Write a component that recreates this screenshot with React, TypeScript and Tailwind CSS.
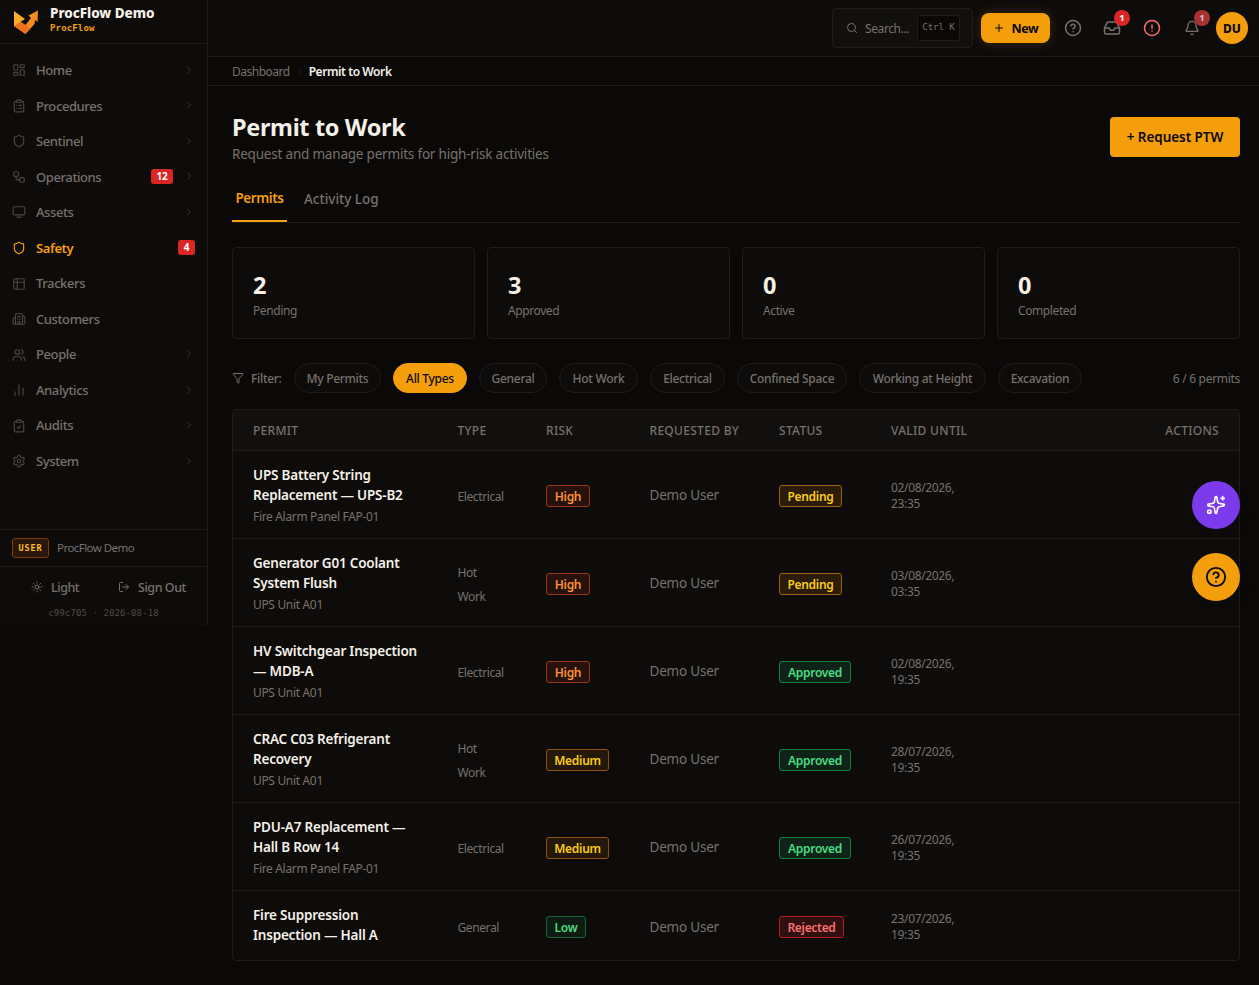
import React from 'react';
import {
  LayoutDashboard, ClipboardList, Shield, Workflow, Monitor, Table2, Building2, Users, ChartNoAxesColumn,
  ClipboardCheck, Settings, ChevronRight, Sun, LogOut, Search, Plus, CircleHelp, Inbox, CircleAlert, Bell,
  Filter, Sparkles, type LucideIcon,
} from 'lucide-react';

interface NavItem {
  label: string;
  icon: LucideIcon;
  badge?: string;
  active?: boolean;
  chevron?: boolean;
}

interface Permit {
  title: string;
  asset?: string;
  type: string;
  risk: 'High' | 'Medium' | 'Low';
  status: 'Pending' | 'Approved' | 'Rejected';
  date: string;
  time: string;
}

const navItems: NavItem[] = [
  { label: 'Home', icon: LayoutDashboard, chevron: true },
  { label: 'Procedures', icon: ClipboardList, chevron: true },
  { label: 'Sentinel', icon: Shield, chevron: true },
  { label: 'Operations', icon: Workflow, badge: '12', chevron: true },
  { label: 'Assets', icon: Monitor, chevron: true },
  { label: 'Safety', icon: Shield, badge: '4', active: true },
  { label: 'Trackers', icon: Table2 },
  { label: 'Customers', icon: Building2 },
  { label: 'People', icon: Users, chevron: true },
  { label: 'Analytics', icon: ChartNoAxesColumn, chevron: true },
  { label: 'Audits', icon: ClipboardCheck, chevron: true },
  { label: 'System', icon: Settings, chevron: true },
];

const stats = [
  { value: 2, label: 'Pending' },
  { value: 3, label: 'Approved' },
  { value: 0, label: 'Active' },
  { value: 0, label: 'Completed' },
];

const filters = [
  { label: 'My Permits', width: 'w-[87px]' },
  { label: 'All Types', width: 'w-[74px]', active: true },
  { label: 'General', width: 'w-[68px]' },
  { label: 'Hot Work', width: 'w-[79px]' },
  { label: 'Electrical', width: 'w-[75px]' },
  { label: 'Confined Space', width: 'w-[110px]' },
  { label: 'Working at Height', width: 'w-[127px]' },
  { label: 'Excavation', width: 'w-[84px]' },
];

const permits: Permit[] = [
  { title: 'UPS Battery String\nReplacement — UPS-B2', asset: 'Fire Alarm Panel FAP-01', type: 'Electrical', risk: 'High', status: 'Pending', date: '02/08/2026,', time: '23:35' },
  { title: 'Generator G01 Coolant\nSystem Flush', asset: 'UPS Unit A01', type: 'Hot\nWork', risk: 'High', status: 'Pending', date: '03/08/2026,', time: '03:35' },
  { title: 'HV Switchgear Inspection\n— MDB-A', asset: 'UPS Unit A01', type: 'Electrical', risk: 'High', status: 'Approved', date: '02/08/2026,', time: '19:35' },
  { title: 'CRAC C03 Refrigerant\nRecovery', asset: 'UPS Unit A01', type: 'Hot\nWork', risk: 'Medium', status: 'Approved', date: '28/07/2026,', time: '19:35' },
  { title: 'PDU-A7 Replacement —\nHall B Row 14', asset: 'Fire Alarm Panel FAP-01', type: 'Electrical', risk: 'Medium', status: 'Approved', date: '26/07/2026,', time: '19:35' },
  { title: 'Fire Suppression\nInspection — Hall A', type: 'General', risk: 'Low', status: 'Rejected', date: '23/07/2026,', time: '19:35' },
];

const riskStyles = {
  High: 'w-11 bg-[#26120b] border-[#9a3412] text-[#fb923c]',
  Medium: 'w-[63px] bg-[#23180a] border-[#92500e] text-[#facc15]',
  Low: 'w-10 bg-[#0e1c13] border-[#166534] text-[#4ade80]',
};

const statusStyles = {
  Pending: 'w-[63px] bg-[#2b1c0c] border-[#a16207] text-[#facc15]',
  Approved: 'w-[72px] bg-[#0f2318] border-[#15803d] text-[#4ade80]',
  Rejected: 'w-[65px] bg-[#2e1010] border-[#b91c1c] text-[#f87171]',
};

const Tag: React.FC<{ label: string; className: string }> = ({ label, className }) => (
  <span className={`mt-[3px] flex h-[22px] items-center justify-center rounded-[3px] border pt-0.5 text-xs font-semibold tracking-[-0.3px] ${className}`}>
    {label}
  </span>
);

const Logo: React.FC = () => (
  <svg viewBox="0 0 24 24" className="h-6 w-6">
    <path d="M0 16 L6 11.5 L11.5 15 L17 8 L14.5 5.5 L24 0.5 L23.5 12 L21 10 L20.5 14 L11.5 24 Z" fill="#f68b1f" />
    <path d="M0 16 L6 12 L11.5 15 L16 18.8 L11.5 24 Z" fill="#f0701f" />
    <path d="M0 1 L11 9 L0 16 Z" fill="#fbab2c" />
  </svg>
);

const Sidebar: React.FC = () => (
  <aside className="flex h-[625px] w-52 shrink-0 flex-col border-r border-[#1f1d1b] bg-[#0d0c0a]">
    <div className="flex h-11 items-center gap-3 border-b border-[#1f1d1b] pl-3.5">
      <Logo />
      <div className="pb-0.5">
        <div className="text-[13.5px] leading-[15px] font-extrabold tracking-[-0.05px] text-[#f5f0e8]">ProcFlow Demo</div>
        <div className="mt-px font-['DejaVu_Sans_Mono'] text-[9px] leading-[13px] font-semibold tracking-[0.15px] text-[#f59e0b]">ProcFlow</div>
      </div>
    </div>

    <nav className="flex-1 pt-[9px]">
      {navItems.map(({ label, icon: Icon, badge, active, chevron }) => (
        <div key={label} className={`flex h-[35.55px] items-center px-3 ${active ? 'text-[#f59e0b]' : 'text-[#78716c]'}`}>
          <Icon className={`mb-px h-3.5 w-3.5 ${active ? '' : 'text-[#4a4540]'}`} />
          <span className={`ml-2.5 flex-1 text-[13px] tracking-[-0.4px] ${active ? 'font-semibold' : 'font-medium'}`}>{label}</span>
          {badge && (
            <span className={`mb-0.5 flex h-[15px] items-center justify-center rounded-[3px] bg-[#dc2626] text-[10px] font-bold tracking-[-0.2px] text-white ${active ? 'w-[17px]' : 'mr-2.5 w-[22px]'}`}>
              {badge}
            </span>
          )}
          {chevron && <ChevronRight className="mb-0.5 h-3 w-3 text-[#3b3734]" />}
        </div>
      ))}
    </nav>

    <div className="flex h-[37px] items-center border-t border-[#1f1d1b] pl-3">
      <span className="flex h-5 w-[37px] items-center justify-center rounded-[3px] border border-[#7c3a0c] bg-[#2a170a] font-['DejaVu_Sans_Mono'] text-[8.5px] font-bold tracking-[0.9px] text-[#fbbf24]">
        USER
      </span>
      <span className="ml-2 text-[11.5px] tracking-[-0.55px] text-[#78716c]">ProcFlow Demo</span>
    </div>

    <div className="h-[59px] border-t border-[#1f1d1b] pt-[9px] text-[#78716c]">
      <div className="flex h-6 items-center text-[12.5px] font-medium tracking-[-0.45px]">
        <Sun className="mb-0.5 ml-[31px] h-3 w-3" />
        <span className="ml-2 w-[28px]">Light</span>
        <LogOut className="mb-0.5 ml-[39px] h-3 w-3" />
        <span className="ml-2">Sign Out</span>
      </div>
      <div className="mt-[5px] text-center font-['DejaVu_Sans_Mono'] text-[9px] leading-4 tracking-[0.1px] text-[#4f4a45]">c99c705 · 2026-08-18</div>
    </div>
  </aside>
);

const TopBar: React.FC = () => (
  <header className="flex h-[57px] items-center justify-end border-b border-[#1f1d1b] bg-[#0d0c0a] pr-[11px] text-[#78716c]">
    <div className="flex h-10 w-[141px] items-center rounded border border-[#1f1d1b] bg-[#11100e] pl-[13px]">
      <Search className="h-3 w-3" />
      <span className="mt-px ml-[7px] w-11 text-xs tracking-[-0.4px]">Search...</span>
      <kbd className="ml-2 flex h-[26px] w-[43px] items-center justify-center rounded-[3px] border border-[#1f1d1b] bg-[#0a0908] font-['DejaVu_Sans_Mono'] text-[9px]">
        Ctrl K
      </kbd>
    </div>
    <button className="ml-2 flex h-[30px] w-[69px] items-center justify-center gap-[7px] rounded-lg bg-[#f59e0b] text-[12.5px] font-bold tracking-[-0.4px] text-[#0a0908] shadow-[0_0_12px_rgba(245,158,11,0.2)]">
      <Plus className="h-3 w-3" />
      <span className="mt-0.5">New</span>
    </button>
    <CircleHelp className="ml-3.5 h-[18px] w-[18px]" />
    <div className="relative ml-[21px]">
      <Inbox className="h-[18px] w-[18px]" />
      <span className="absolute -top-[9px] left-[11px] flex h-4 w-4 items-center justify-center rounded-full bg-[#dc2626] text-[9.5px] font-bold text-white">1</span>
    </div>
    <CircleAlert className="ml-[22px] h-[18px] w-[18px] text-[#f87171]" />
    <div className="relative ml-[23px]">
      <Bell className="h-4 w-4" />
      <span className="absolute -top-[10px] left-[10px] flex h-4 w-4 items-center justify-center rounded-full bg-[#a83232] text-[9.5px] font-bold text-[#c9c4c0]">1</span>
    </div>
    <div className="ml-4 flex h-8 w-8 items-center justify-center rounded-full bg-[#f59e0b] pt-0.5 text-xs font-extrabold text-[#0a0908]">DU</div>
  </header>
);

const PermitTable: React.FC = () => (
  <div className="mt-4 overflow-hidden rounded border border-[#1f1d1b] bg-[#0d0c0a]">
    <table className="w-full table-fixed border-collapse text-left text-[#78716c]">
      <colgroup>
        <col className="w-[204.5px]" />
        <col className="w-[88.5px]" />
        <col className="w-[103.5px]" />
        <col className="w-[129.5px]" />
        <col className="w-28" />
        <col className="w-[146px]" />
        <col />
      </colgroup>
      <thead>
        <tr className="h-10 border-b border-[#1f1d1b] bg-[#11100e] text-xs tracking-[0.3px] whitespace-nowrap uppercase">
          {['Permit', 'Type', 'Risk', 'Requested by', 'Status', 'Valid until'].map((head) => (
            <th key={head} className="pt-0.5 pl-5 font-medium">{head}</th>
          ))}
          <th className="pt-0.5 pr-5 text-right font-medium">Actions</th>
        </tr>
      </thead>
      <tbody>
        {permits.map((permit) => (
          <tr key={permit.title} className={`border-b border-[#1f1d1b] last:border-b-0 ${permit.asset ? 'h-[88px]' : 'h-[70px]'}`}>
            <td className={`pl-5 whitespace-pre ${permit.asset ? 'pt-[3px]' : ''}`}>
              <div className="text-[13.5px] leading-5 font-semibold tracking-[-0.2px] text-[#f5f0e8]">{permit.title}</div>
              {permit.asset && <div className="mt-0.5 text-xs leading-5 tracking-[-0.33px]">{permit.asset}</div>}
            </td>
            <td className="pt-[5px] pl-5 text-xs leading-6 tracking-[-0.4px] whitespace-pre">{permit.type}</td>
            <td className="pt-px pl-5"><Tag label={permit.risk} className={riskStyles[permit.risk]} /></td>
            <td className="pt-[3px] pl-5 text-[13.5px] tracking-[-0.2px]">Demo User</td>
            <td className="pt-px pl-5"><Tag label={permit.status} className={statusStyles[permit.status]} /></td>
            <td className="pt-[3px] pl-5 text-xs leading-4 tracking-[-0.35px]">{permit.date}<br />{permit.time}</td>
            <td />
          </tr>
        ))}
      </tbody>
    </table>
  </div>
);

export default function App() {
  return (
    <div className="relative flex h-[985px] w-full items-start overflow-hidden bg-[#0a0908] font-['Noto_Sans',sans-serif]">
      <Sidebar />

      <div className="min-w-0 flex-1">
        <TopBar />

        <div className="flex h-[29px] items-center border-b border-[#1f1d1b] pt-0.5 pl-6 text-xs text-[#78716c]">
          <span className="tracking-[-0.5px]">Dashboard</span>
          <ChevronRight className="mx-1 h-[11px] w-[11px] text-[#292524]" />
          <span className="font-semibold tracking-[-0.42px] text-[#f5f0e8]">Permit to Work</span>
        </div>

        <main className="pt-[27px] pr-[19px] pl-6">
          <div className="flex items-start justify-between">
            <div>
              <h1 className="text-[23.5px] leading-7 font-bold tracking-[-0.35px] text-[#f5f0e8]">Permit to Work</h1>
              <p className="mt-[3px] text-[13.5px] leading-5 tracking-[-0.2px] text-[#78716c]">Request and manage permits for high-risk activities</p>
            </div>
            <button className="mt-1 h-10 w-[130px] rounded bg-[#f59e0b] pt-px text-[13.5px] font-semibold tracking-[-0.05px] text-[#0a0908]">+ Request PTW</button>
          </div>

          {/* Tabs */}
          <div className="mt-[11px] flex h-12 border-b border-[#1f1d1b] text-[13.5px]">
            <div className="flex h-[47px] w-[55px] items-center justify-center border-b-2 border-[#f59e0b] pt-0.5 font-semibold tracking-[-0.4px] text-[#f59e0b]">Permits</div>
            <div className="ml-[17px] flex items-center pt-0.5 font-medium text-[#78716c]">Activity Log</div>
          </div>

          {/* Stats */}
          <div className="mt-6 grid grid-cols-4 gap-3">
            {stats.map((stat) => (
              <div key={stat.label} className="h-[92px] rounded border border-[#1f1d1b] bg-[#0d0c0a] px-5 pt-[21px]">
                <div className="text-[23.5px] leading-8 font-bold text-[#f5f0e8]">{stat.value}</div>
                <div className="text-xs leading-5 tracking-[-0.4px] text-[#78716c]">{stat.label}</div>
              </div>
            ))}
          </div>

          {/* Filters */}
          <div className="mt-6 flex h-[30px] items-center text-xs font-medium tracking-[-0.3px] text-[#78716c]">
            <Filter className="h-3 w-3" />
            <span className="ml-[7px] w-[31px] pt-0.5 whitespace-nowrap">Filter:</span>
            <div className="ml-3 flex gap-3">
              {filters.map((filter) => (
                <button
                  key={filter.label}
                  className={`h-[30px] rounded-full border pt-px whitespace-nowrap ${filter.width} ${
                    filter.active ? 'border-[#f59e0b] bg-[#f59e0b] text-[#0a0908]' : 'border-[#1f1d1b] bg-[#0d0c0a]'
                  }`}
                >
                  {filter.label}
                </button>
              ))}
            </div>
            <span className="ml-auto pt-0.5 font-normal">6 / 6 permits</span>
          </div>

          <PermitTable />
        </main>
      </div>

      {/* Floating actions */}
      <button className="absolute top-[481px] right-[19px] flex h-12 w-12 items-center justify-center rounded-full bg-[#7c3aed] text-white shadow-lg">
        <Sparkles className="h-5 w-5" />
      </button>
      <button className="absolute top-[553px] right-[19px] flex h-12 w-12 items-center justify-center rounded-full bg-[#f59e0b] text-[#0a0908] shadow-lg">
        <CircleHelp className="h-[22px] w-[22px]" />
      </button>
    </div>
  );
}
